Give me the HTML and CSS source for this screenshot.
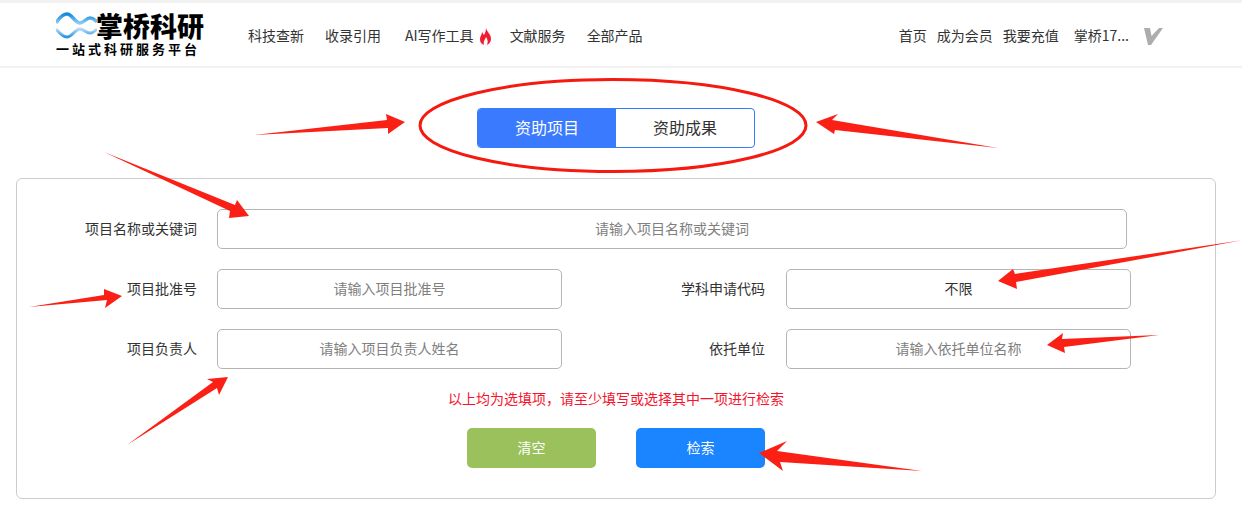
FILE: index.html
```html
<!DOCTYPE html>
<html lang="zh-CN">
<head>
  <meta charset="UTF-8">
  <meta name="viewport" content="width=device-width, initial-scale=1.0">
  <title>掌桥科研</title>
  <link rel="stylesheet" href="styles.css">
</head>
<body>
  <header class="top-bar">
    <div class="logo">
      <div class="logo-main">
        <svg class="logo-wave" width="41" height="28" viewBox="0 0 41 28">
          <defs>
            <linearGradient id="waveTop" x1="0" y1="0" x2="0" y2="1">
              <stop offset="0" stop-color="#1288de"/>
              <stop offset="1" stop-color="#8ccbf3"/>
            </linearGradient>
            <linearGradient id="waveBottom" x1="0" y1="0" x2="0" y2="1">
              <stop offset="0" stop-color="#b5dcf6"/>
              <stop offset="1" stop-color="#2b94e2"/>
            </linearGradient>
          </defs>
          <path d="M0 11 C4 5 7 2 11 2 C16 2 19 11 24 11 C28 11 30 6 34 6 C37 6 39 8 41 10" fill="none" stroke="url(#waveTop)" stroke-width="3.500"/>
          <path d="M0 17 C4 22 7 25 11 25 C16 25 19 17 24 17 C28 17 30 21 34 21 C37 21 39 19 41 17" fill="none" stroke="url(#waveBottom)" stroke-width="3"/>
        </svg>
        <span class="logo-title">掌桥科研</span>
      </div>
      <div class="logo-sub">一站式科研服务平台</div>
    </div>
    <nav class="nav">
      <a>科技查新</a>
      <a>收录引用</a>
      <a class="nav-ai">AI写作工具
        <svg class="flame" width="13" height="17" viewBox="0 0 13 17">
          <path d="M7 0 C8 4 12 6 12 11 C12 14 10 16 8 17 C9 14 9 12 7 9 C6 12 4 13 5 17 C2 16 1 14 1 11 C1 8 3 7 3 4 C4 5 4 6 5 7 C6 5 7 3 7 0 Z" fill="#f01c30"/>
        </svg>
      </a>
      <a>文献服务</a>
      <a>全部产品</a>
    </nav>
    <div class="user-links">
      <a>首页</a>
      <a>成为会员</a>
      <a>我要充值</a>
      <a class="user-name">掌桥17...</a>
      <svg class="vip" width="19" height="18" viewBox="0 0 19 18">
        <path d="M0 1 L6 1 L7.500 9 L15 1 L19 1 L7 18 L4 18 Z" fill="#adadad"/>
      </svg>
    </div>
  </header>

  <main>
    <div class="tabs">
      <div class="tab active">资助项目</div>
      <div class="tab">资助成果</div>
    </div>

    <form class="panel">
      <div class="row">
        <label class="label">项目名称或关键词</label>
        <input class="field wide" placeholder="请输入项目名称或关键词">
      </div>
      <div class="row">
        <label class="label">项目批准号</label>
        <input class="field" placeholder="请输入项目批准号">
        <label class="label label-right">学科申请代码</label>
        <div class="field select">不限</div>
      </div>
      <div class="row">
        <label class="label">项目负责人</label>
        <input class="field" placeholder="请输入项目负责人姓名">
        <label class="label label-right">依托单位</label>
        <input class="field" placeholder="请输入依托单位名称">
      </div>
      <p class="note">以上均为选填项，请至少填写或选择其中一项进行检索</p>
      <div class="buttons">
        <button type="button" class="btn btn-clear">清空</button>
        <button type="button" class="btn btn-search">检索</button>
      </div>
    </form>
  </main>

  <!-- red annotations drawn on top of the screenshot -->
  <svg class="marks" width="1242" height="505" viewBox="0 0 1242 505">
    <ellipse cx="613" cy="125.500" rx="193" ry="46" fill="none" stroke="#f5190f" stroke-width="3"/>
    <g fill="#fb2015">
      <polygon points="254,135 387,120 386,114 405,122 388,134 388,128"/>
      <polygon points="998,148 832,120 838,114 816,122 834,134 835,130"/>
      <polygon points="104,152 235,205 237,200 249,216 229,218 230,211"/>
      <polygon points="29,307 104,295 104,289 122,296 105,308 107,300"/>
      <polygon points="127,445 213,382 207,379 228,377 219,395 217,388"/>
      <polygon points="1244,240 1015,274 1013,269 998,281 1017,289 1016,282"/>
      <polygon points="1159,335 1062,339 1063,333 1047,345 1065,353 1064,347"/>
      <polygon points="922,471 777,451 787,441 759,453 783,471 780,462"/>
    </g>
  </svg>
</body>
</html>
```

FILE: styles.css
```css
* { box-sizing: border-box; }
body {
  position: relative;
  margin: 0;
  background: #fff;
  color: #333;
  font-family: "Noto Sans CJK SC", "Liberation Sans", sans-serif;
  font-size: 14px;
  overflow: hidden;
}

/* header */
.top-bar {
  display: flex;
  align-items: center;
  height: 68px;
  padding: 1px 0 0 56px;
  border-top: 3px solid #f2f2f2;
  border-bottom: 2px solid #f2f2f2;
}
.logo { width: 192px; margin-top: -3px; color: #000; }
.logo-main { display: flex; align-items: center; height: 29px; }
.logo-title {
  margin-left: -1px;
  font-size: 27px;
  font-weight: 900;
  line-height: 29px;
  white-space: nowrap;
}
.logo-sub {
  margin-top: 1px;
  font-size: 13px;
  font-weight: 700;
  letter-spacing: 3px;
  line-height: 15px;
  white-space: nowrap;
}
.nav { display: flex; align-items: center; gap: 21px; }
.nav-ai {
  display: flex;
  align-items: center;
  gap: 5px;
  margin: 0 -3px 0 3px;
}
.flame { margin-top: 2px; }
.user-links {
  display: flex;
  align-items: center;
  gap: 10px;
  margin-left: auto;
  margin-right: 79px;
}
.user-name { margin-left: 5px; }
.vip { margin-left: 5px; margin-top: 1px; }

/* tabs */
.tabs {
  display: flex;
  width: 278px;
  height: 40px;
  margin: 40px 0 30px 477px;
  border: 1px solid #3a7afe;
  border-radius: 4px;
  overflow: hidden;
}
.tab {
  flex: 1;
  font-size: 16px;
  line-height: 37px;
  text-align: center;
}
.tab.active { background: #3a7afe; color: #fff; }

/* form panel */
.panel {
  width: 1200px;
  height: 321px;
  margin-left: 16px;
  padding-top: 30px;
  border: 1px solid #ccc;
  border-radius: 6px;
}
.row {
  display: flex;
  align-items: center;
  margin-bottom: 20px;
}
.label {
  flex: 0 0 180px;
  margin-right: 20px;
  padding-bottom: 2px;
  text-align: right;
}
.label-right { flex-basis: 203px; margin-right: 21px; }
.field {
  width: 345px;
  height: 40px;
  padding: 0 2px 3px;
  border: 1px solid #b5b5b5;
  border-radius: 5px;
  background: #fff;
  color: #333;
  font-family: inherit;
  font-size: 14px;
  text-align: center;
  outline: none;
}
.field::placeholder { color: #808080; opacity: 1; }
.field.wide { width: 910px; }
.select { line-height: 36px; }
.note {
  margin: -1px 0 0;
  color: #f5142d;
  line-height: 20px;
  text-align: center;
}
.buttons {
  display: flex;
  justify-content: center;
  gap: 40px;
  margin-top: 20px;
}
.btn {
  width: 129px;
  height: 40px;
  padding: 0 0 2px;
  border: 0;
  border-radius: 5px;
  color: #fff;
  font-family: inherit;
  font-size: 14px;
}
.btn-clear { background: #9bc15c; }
.btn-search { background: #1a85ff; }

/* annotation layer */
.marks {
  position: absolute;
  top: 0;
  left: 0;
  pointer-events: none;
}
```
